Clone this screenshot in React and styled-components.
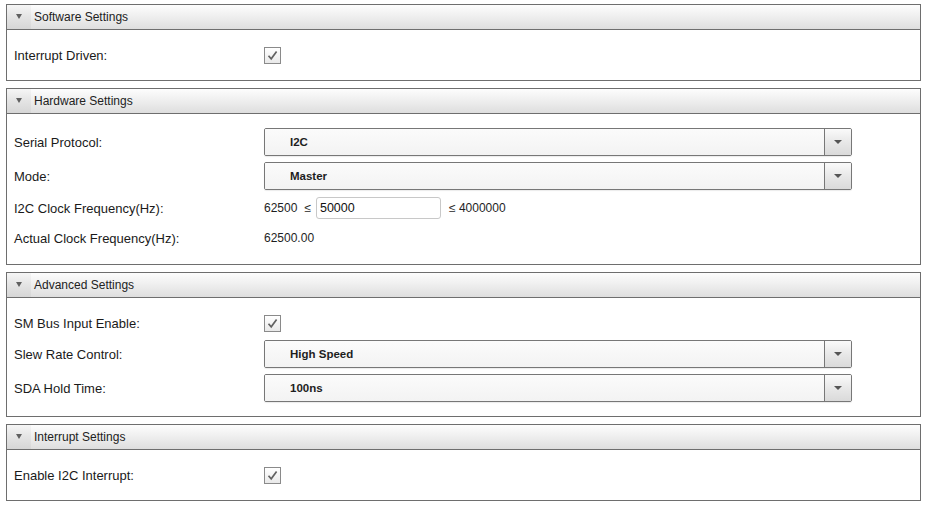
import React, { useState } from 'react';
import styled, { createGlobalStyle } from 'styled-components';

const GlobalStyle = createGlobalStyle`
  body {
    margin: 0;
    background: #ffffff;
    font-family: "Liberation Sans", Arial, sans-serif;
    color: #1e1e1e;
  }
`;

const Page = styled.div`
  display: flex;
  flex-direction: column;
  gap: 7px;
  padding: 4px 4px 4px 6px;
`;

const Panel = styled.section`
  border: 1px solid #6e6e6e;
  background: #ffffff;
`;

const PanelHeader = styled.div`
  display: flex;
  align-items: center;
  height: 24px;
  background: linear-gradient(to bottom, #fdfdfd 0%, #eeeeee 50%, #dedede 100%);
  border-bottom: 1px solid #6e6e6e;
  cursor: pointer;
  user-select: none;
`;

const Toggle = styled.div`
  width: 24px;
  height: 100%;
  display: flex;
  align-items: center;
  justify-content: center;
  background: linear-gradient(to bottom, #f6f6f6 0%, #e4e4e4 50%, #d6d6d6 100%);

  &::after {
    content: '';
    display: block;
    margin-top: -1px;
    border-left: 3.5px solid transparent;
    border-right: 3.5px solid transparent;
    border-top: 5px solid ${(p) => (p.$open ? '#606060' : 'transparent')};
  }
`;

const HeaderTitle = styled.span`
  padding-left: 3px;
  font-size: 12px;
  color: #222;
`;

const PanelBody = styled.div`
  display: flex;
  flex-direction: column;
  gap: 6px;
  padding: 14px 7px;
`;

const Row = styled.div`
  display: flex;
  align-items: center;
  height: ${(p) => p.$h}px;
`;

const Label = styled.div`
  width: 250px;
  flex: none;
  font-size: 13px;
  color: #1a1a1a;
`;

const CheckBox = styled.button`
  width: 17px;
  height: 17px;
  padding: 0;
  display: flex;
  align-items: center;
  justify-content: center;
  border: 1px solid #8a8a8a;
  background: linear-gradient(to bottom, #ffffff 0%, #e9e9e9 100%);
  cursor: pointer;
`;

const Select = styled.div`
  width: 588px;
  height: 28px;
  box-sizing: border-box;
  display: flex;
  border: 1px solid #777;
  border-radius: 2px;
  box-shadow: 0 1px 1px rgba(0, 0, 0, 0.08);
  overflow: hidden;
`;

const SelectValue = styled.div`
  flex: 1;
  display: flex;
  align-items: center;
  padding-left: 25px;
  font-size: 11.5px;
  font-weight: bold;
  color: #1e1e1e;
  background: linear-gradient(to bottom, #fbfbfb 0%, #f3f3f3 100%);
`;

const SelectButton = styled.div`
  width: 26px;
  flex: none;
  display: flex;
  align-items: center;
  justify-content: center;
  border-left: 1px solid #777;
  background: linear-gradient(to bottom, #fafafa 0%, #e8e8e8 50%, #dadada 100%);

  &::after {
    content: '';
    display: block;
    border-left: 4px solid transparent;
    border-right: 4px solid transparent;
    border-top: 4px solid #555;
  }
`;

const Value = styled.span`
  font-size: 12px;
  color: #1e1e1e;
  margin-right: ${(p) => p.$mr || 0}px;
`;

const NumberInput = styled.input`
  width: 125px;
  height: 22px;
  box-sizing: border-box;
  margin-right: 8px;
  padding: 0 3px;
  border: 1px solid #c8c8c8;
  border-radius: 3px;
  font-family: "Liberation Sans", Arial, sans-serif;
  font-size: 12.5px;
  color: #111;
  outline: none;
`;

const Check = ({ checked, onToggle }) => (
  <CheckBox type="button" onClick={onToggle}>
    {checked && (
      <svg width="13" height="13" viewBox="0 0 13 13">
        <path d="M2.5 6.8 L5.2 9.8 L10.6 2.6" fill="none" stroke="#626262" strokeWidth="1.7" />
      </svg>
    )}
  </CheckBox>
);

const Dropdown = ({ value }) => (
  <Select>
    <SelectValue>{value}</SelectValue>
    <SelectButton />
  </Select>
);

const Section = ({ title, children }) => {
  const [open, setOpen] = useState(true);
  return (
    <Panel>
      <PanelHeader onClick={() => setOpen(!open)}>
        <Toggle $open />
        <HeaderTitle>{title}</HeaderTitle>
      </PanelHeader>
      {open && <PanelBody>{children}</PanelBody>}
    </Panel>
  );
};

const App = () => {
  const [checks, setChecks] = useState({ interrupt: true, smbus: true, i2cInt: true });
  const [clock, setClock] = useState('50000');

  const flip = (key) => setChecks({ ...checks, [key]: !checks[key] });

  return (
    <Page>
      <GlobalStyle />
      <Section title="Software Settings">
        <Row $h={22}>
          <Label>Interrupt Driven:</Label>
          <Check checked={checks.interrupt} onToggle={() => flip('interrupt')} />
        </Row>
      </Section>

      <Section title="Hardware Settings">
        <Row $h={28}>
          <Label>Serial Protocol:</Label>
          <Dropdown value="I2C" />
        </Row>
        <Row $h={28}>
          <Label>Mode:</Label>
          <Dropdown value="Master" />
        </Row>
        <Row $h={24}>
          <Label>I2C Clock Frequency(Hz):</Label>
          <Value $mr={7}>62500</Value>
          <Value $mr={5}>≤</Value>
          <NumberInput value={clock} onChange={(e) => setClock(e.target.value)} />
          <Value>≤ 4000000</Value>
        </Row>
        <Row $h={24}>
          <Label>Actual Clock Frequency(Hz):</Label>
          <Value>62500.00</Value>
        </Row>
      </Section>

      <Section title="Advanced Settings">
        <Row $h={22}>
          <Label>SM Bus Input Enable:</Label>
          <Check checked={checks.smbus} onToggle={() => flip('smbus')} />
        </Row>
        <Row $h={28}>
          <Label>Slew Rate Control:</Label>
          <Dropdown value="High Speed" />
        </Row>
        <Row $h={28}>
          <Label>SDA Hold Time:</Label>
          <Dropdown value="100ns" />
        </Row>
      </Section>

      <Section title="Interrupt Settings">
        <Row $h={22}>
          <Label>Enable I2C Interrupt:</Label>
          <Check checked={checks.i2cInt} onToggle={() => flip('i2cInt')} />
        </Row>
      </Section>
    </Page>
  );
};

export default App;
